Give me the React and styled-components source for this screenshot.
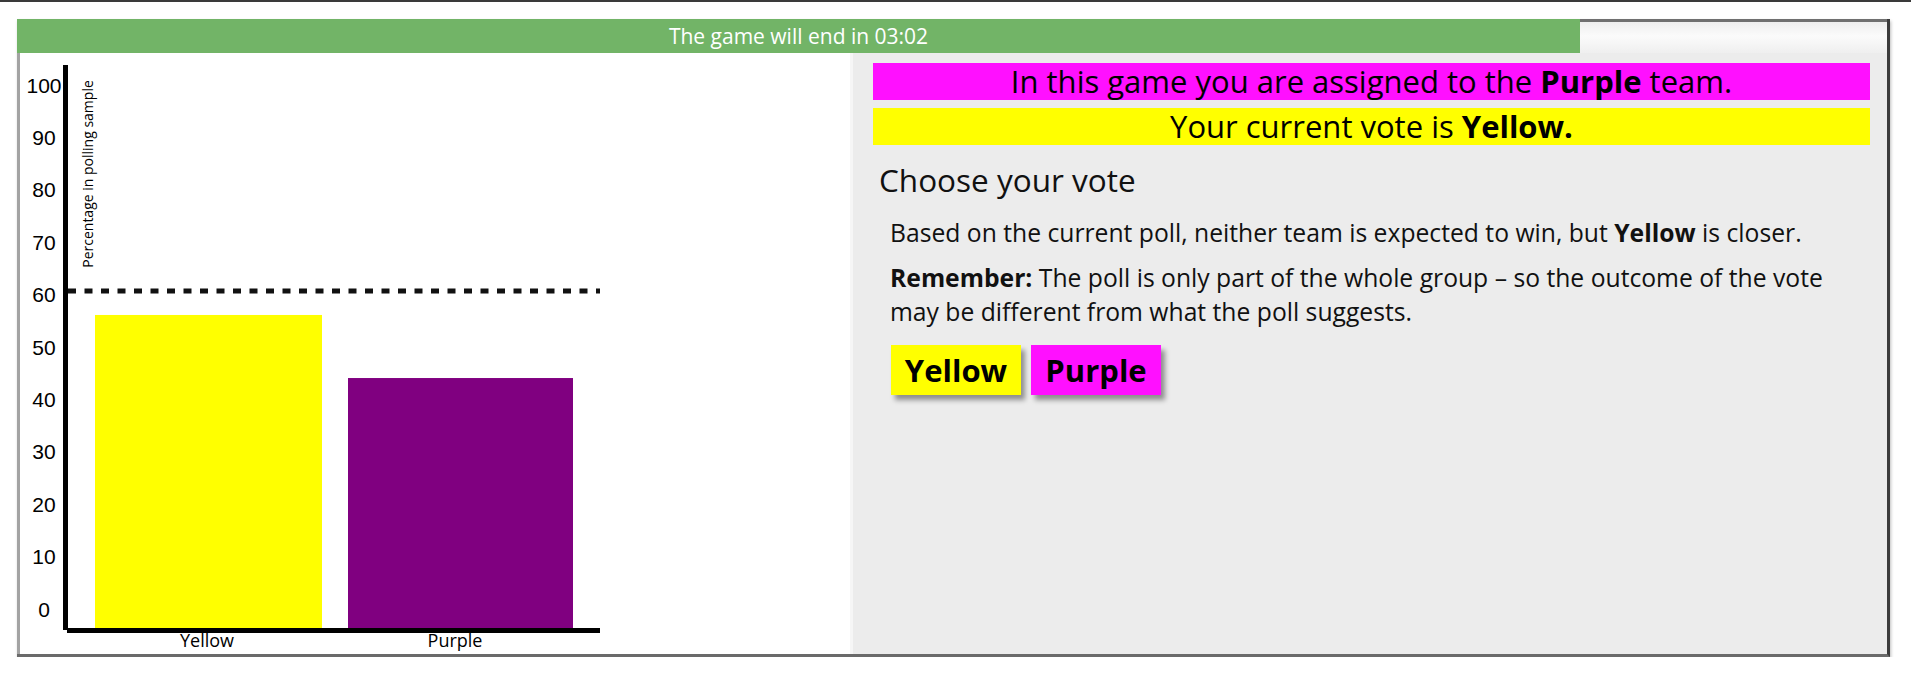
import React from 'react';
import styled, { createGlobalStyle } from 'styled-components';

const poll = [
  { name: 'Yellow', value: 55.6, color: '#ffff00', x: 75, width: 227, labelX: 187 },
  { name: 'Purple', value: 44.4, color: '#800080', x: 328, width: 225, labelX: 435 },
];

// chart geometry (px inside the svg)
const plotTop = 12;
const zeroY = 575;
const scale = 5.63; // px per percent
const thresholdY = 238;

const GlobalStyle = createGlobalStyle`
  html, body {
    margin: 0;
    padding: 0;
    background: #ffffff;
  }
  body {
    font-family: "Open Sans", Lato, sans-serif;
    color: #000;
  }
`;

const TopRule = styled.div`
  height: 2px;
  background: #3a3a3a;
`;

const Frame = styled.div`
  box-sizing: border-box;
  width: 1873px;
  margin: 17px 0 0 17px;
  border-right: 3px solid #3c3c3c;
  border-bottom: 3px solid #6a6a6a;
  box-shadow: 1px 2px 3px rgba(0, 0, 0, 0.25);
`;

const Header = styled.div`
  display: flex;
  height: 34px;
`;

const Countdown = styled.div`
  flex: 0 0 1563px;
  display: flex;
  align-items: center;
  justify-content: center;
  background: #72b467;
  color: #ffffff;
  font-size: 21px;
`;

const HeaderRest = styled.div`
  flex: 1;
  border-top: 3px solid #707070;
  background: linear-gradient(#eeeeee, #fbfbfb 45%, #efefef);
`;

const Body = styled.div`
  display: flex;
  height: 601px;
  border-left: 3px solid #a3a3a3;
`;

const ChartPanel = styled.div`
  flex: 0 0 833px;
  background: #ffffff;
`;

const SidePanel = styled.div`
  flex: 1;
  display: flex;
  flex-direction: column;
  align-items: flex-start;
  padding: 10px 17px 0 20px;
  background: #ececec;
  border-left: 3px solid #f6f6f6;
  margin-left: -3px;
`;

const Banner = styled.div`
  align-self: stretch;
  height: 37px;
  margin-bottom: 8px;
  display: flex;
  align-items: center;
  justify-content: center;
  background: ${(p) => p.$bg};
  font-size: 31px;
  line-height: 1;
  color: #000;

  b {
    font-weight: 700;
  }
`;

const Heading = styled.h2`
  margin: 10px 0 0 6px;
  font-size: 31.5px;
  font-weight: 400;
  line-height: 34px;
  color: #111;
`;

const Para = styled.p`
  margin: ${(p) => p.$top}px 0 0 17px;
  max-width: 945px;
  font-size: 24.7px;
  line-height: 34px;
  color: #111;

  b {
    font-weight: 700;
  }
`;

const Choices = styled.div`
  display: flex;
  gap: 10px;
  margin: 16px 0 0 18px;
`;

const VoteButton = styled.button`
  width: 130px;
  height: 50px;
  border: none;
  padding: 0;
  background: ${(p) => p.$bg};
  font-family: "Open Sans", Lato, sans-serif;
  font-size: 31px;
  font-weight: 700;
  color: #000;
  box-shadow: 4px 5px 5px rgba(0, 0, 0, 0.4);
  cursor: pointer;
`;

const Chart = () => {
  const ticks = [100, 90, 80, 70, 60, 50, 40, 30, 20, 10, 0];
  return (
    <svg width="833" height="601" viewBox="0 0 833 601">
      {ticks.map((t, i) => (
        <text
          key={t}
          x="24"
          y={32 + i * 52.4}
          textAnchor="middle"
          dominantBaseline="central"
          fontFamily="'Liberation Sans', Arial, sans-serif"
          fontSize="21"
        >
          {t}
        </text>
      ))}
      {poll.map((p) => (
        <rect
          key={p.name}
          x={p.x}
          y={zeroY - p.value * scale}
          width={p.width}
          height={p.value * scale}
          fill={p.color}
        />
      ))}
      <line
        x1="48"
        x2="580"
        y1={thresholdY}
        y2={thresholdY}
        stroke="#111"
        strokeWidth="5"
        strokeDasharray="8 8.5"
      />
      <rect x="43" y={plotTop} width="5" height={zeroY - plotTop + 2} fill="#000" />
      <rect x="47" y={zeroY} width="533" height="5" fill="#000" />
      <text
        transform="translate(73 121) rotate(-90)"
        textAnchor="middle"
        fontFamily="'Open Sans', sans-serif"
        fontSize="14"
      >
        Percentage in polling sample
      </text>
      {poll.map((p) => (
        <text
          key={p.name}
          x={p.labelX}
          y="587"
          textAnchor="middle"
          dominantBaseline="central"
          fontFamily="'Open Sans', sans-serif"
          fontSize="18"
        >
          {p.name}
        </text>
      ))}
    </svg>
  );
};

const App = () => {
  const [vote, setVote] = React.useState('Yellow');
  return (
    <>
      <GlobalStyle />
      <TopRule />
      <Frame>
        <Header>
          <Countdown>The game will end in 03:02</Countdown>
          <HeaderRest />
        </Header>
        <Body>
          <ChartPanel>
            <Chart />
          </ChartPanel>
          <SidePanel>
            <Banner $bg="#ff10ff">
              <span>
                In this game you are assigned to the <b>Purple</b> team.
              </span>
            </Banner>
            <Banner $bg="#ffff00">
              <span>
                Your current vote is <b>{vote}.</b>
              </span>
            </Banner>
            <Heading>Choose your vote</Heading>
            <Para $top={19}>
              Based on the current poll, neither team is expected to win, but <b>Yellow</b> is closer.
            </Para>
            <Para $top={11}>
              <b>Remember:</b> The poll is only part of the whole group – so the outcome of the vote
              may be different from what the poll suggests.
            </Para>
            <Choices>
              <VoteButton $bg="#ffff00" onClick={() => setVote('Yellow')}>
                Yellow
              </VoteButton>
              <VoteButton $bg="#ff10ff" onClick={() => setVote('Purple')}>
                Purple
              </VoteButton>
            </Choices>
          </SidePanel>
        </Body>
      </Frame>
    </>
  );
};

export default App;
